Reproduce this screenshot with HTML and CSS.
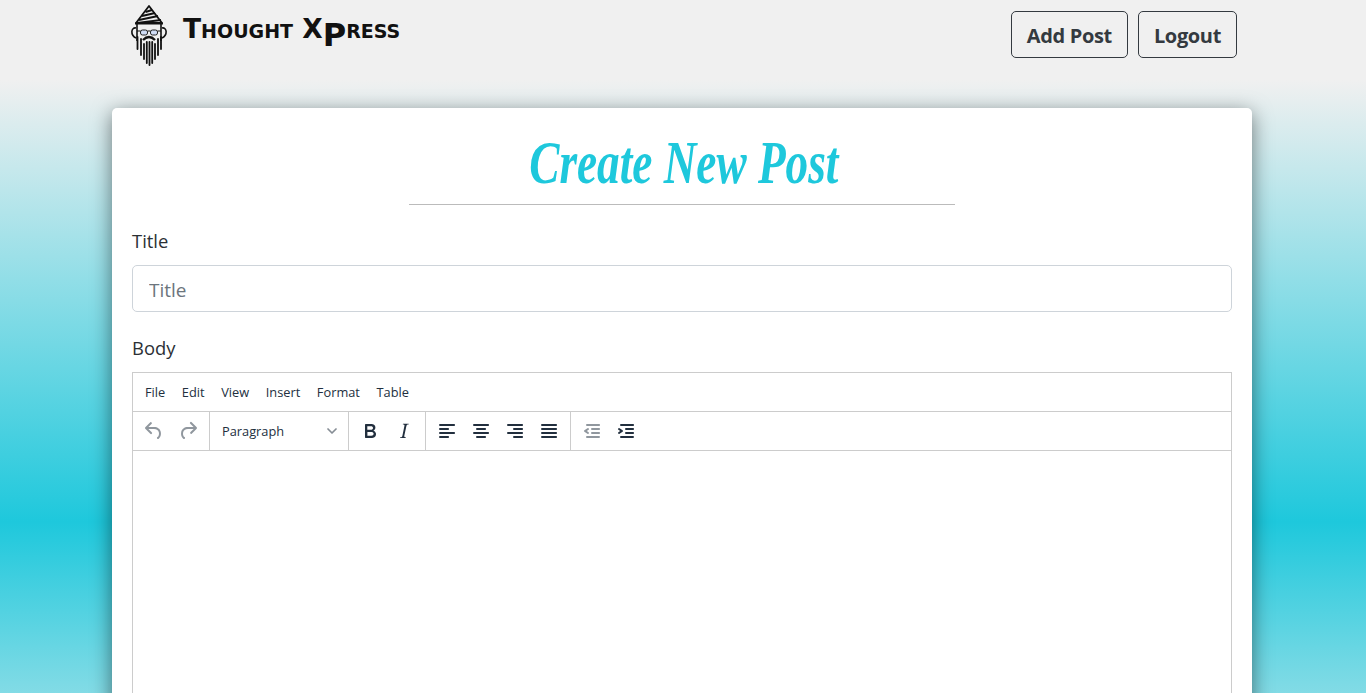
FILE: index.html
```html
<!DOCTYPE html>
<html lang="en">
<head>
<meta charset="utf-8">
<title>Create New Post</title>
<link rel="stylesheet" href="styles.css">
</head>
<body>
<header class="site-header">
  <a class="brand" href="#">
    <svg class="brand-mark" viewBox="0 0 40 62" width="40" height="62" aria-hidden="true">
      <path d="M20 1 L7 18 H33 Z" fill="#f0f0f0" stroke="#111" stroke-width="1.8" stroke-linejoin="round"/>
      <path d="M16.500 7 L23 5 M13 11 L26 8 M10 15 L29 11 M8 18 L32 15" stroke="#111" stroke-width="2" fill="none"/>
      <path d="M6 18.500 H34" stroke="#111" stroke-width="2"/>
      <path d="M8 19 V36 M32 19 V36" stroke="#111" stroke-width="1.600"/>
      <path d="M7 23 C2 22 1 30 7 33 M33 23 C38 22 39 30 33 33" fill="none" stroke="#111" stroke-width="1.600"/>
      <rect x="11.500" y="25" width="7" height="5" rx="2" fill="#cfdcf5" stroke="#222" stroke-width="1"/>
      <rect x="21.500" y="25" width="7" height="5" rx="2" fill="#cfdcf5" stroke="#222" stroke-width="1"/>
      <path d="M8 26 H11.500 M18.500 26 H21.500 M28.500 26 H32" stroke="#111" stroke-width="1.200"/>
      <path d="M14 35 Q20 29 26 35" fill="none" stroke="#111" stroke-width="2.400"/>
      <path d="M8.500 32 V44 M12 34 V50 M15 39 V54 M17.800 37 V58 M20.500 37 V60 M23.200 37 V58 M26 39 V54 M29 34 V50 M32 32 V44" stroke="#111" stroke-width="1.800" fill="none" stroke-linecap="round"/>
    </svg>
    <span class="brand-name">Thought X<span class="brand-drop">p</span>ress</span>
  </a>
  <nav class="site-nav">
    <a class="nav-btn" href="#">Add Post</a>
    <a class="nav-btn" href="#">Logout</a>
  </nav>
</header>

<main class="card">
  <h1 class="page-title"><span class="page-title-text">Create New Post</span></h1>
  <hr class="title-rule">
  <form class="post-form">
    <label class="field-label" for="title">Title</label>
    <input class="text-input" id="title" type="text" placeholder="Title">
    <label class="field-label body-label">Body</label>
    <div class="editor">
      <div class="menubar">
        <span>File</span><span>Edit</span><span>View</span><span>Insert</span><span>Format</span><span>Table</span>
      </div>
      <div class="toolbar">
        <div class="tb-group tb-first">
          <span class="tb-btn is-off"><svg width="24" height="24" viewBox="0 0 24 24"><path d="M6.4 8H12c3.7 0 6.2 2 6.8 5.1.6 2.7-.4 5.6-2.3 6.8a1 1 0 0 1-1-1.8c1.1-.6 1.8-2.7 1.4-4.6-.5-2.1-2.1-3.5-4.9-3.500H6.4l3.3 3.3a1 1 0 1 1-1.4 1.4l-5-5a1 1 0 0 1 0-1.400l5-5a1 1 0 0 1 1.400 1.400L6.400 8z"/></svg></span>
          <span class="tb-btn is-off"><svg width="24" height="24" viewBox="0 0 24 24"><path d="M17.6 10H12c-2.800 0-4.400 1.400-4.900 3.500-.4 2 .3 4 1.400 4.600a1 1 0 1 1-1 1.800c-2-1.200-2.900-4.100-2.300-6.800.6-3 3-5.100 6.800-5.100h5.600l-3.300-3.300a1 1 0 1 1 1.400-1.400l5 5a1 1 0 0 1 0 1.400l-5 5a1 1 0 0 1-1.400-1.400l3.300-3.300z"/></svg></span>
        </div>
        <div class="tb-select">
          <span>Paragraph</span>
          <svg width="10" height="10" viewBox="0 0 10 10"><path d="M1 3 L5 7 L9 3" fill="none" stroke="#222f3e" stroke-opacity=".55" stroke-width="1.700" stroke-linecap="round" stroke-linejoin="round"/></svg>
        </div>
        <div class="tb-group">
          <span class="tb-btn"><svg width="24" height="24" viewBox="0 0 24 24"><path fill-rule="evenodd" d="M7.800 19c-.3 0-.5 0-.6-.2l-.2-.5V5.700c0-.2 0-.4.2-.5l.6-.2h5c1.500 0 2.700.3 3.500 1 .7.6 1.100 1.400 1.100 2.500a3 3 0 0 1-.6 1.900c-.4.6-1 1-1.600 1.200.4.100.9.300 1.300.6s.8.7 1 1.200c.4.400.5 1 .5 1.600 0 1.300-.4 2.300-1.300 3-.8.7-2.100 1-3.800 1H7.800zm5-8.300c.6 0 1.200-.1 1.600-.5.4-.3.6-.7.6-1.300 0-1.100-.8-1.700-2.300-1.700H9.300v3.500h3.400zm.5 6c.7 0 1.300-.1 1.700-.4.4-.4.6-.9.6-1.500s-.2-1-.7-1.400c-.4-.3-1-.4-2-.4H9.400v3.800h4z"/></svg></span>
          <span class="tb-btn"><svg width="24" height="24" viewBox="0 0 24 24"><path d="M16.700 4.700l-.1.900h-.3c-.6 0-1 0-1.400.3-.3.3-.4.6-.5 1.100l-2.100 9.800v.6c0 .5.400.8 1.400.8h.2l-.2.800H8l.2-.8h.2c1.100 0 1.800-.5 2-1.500l2-9.800.1-.5c0-.6-.4-.8-1.400-.8h-.3l.2-.9h5.800z"/></svg></span>
        </div>
        <div class="tb-group">
          <span class="tb-btn"><svg width="24" height="24" viewBox="0 0 24 24"><path d="M5 5h14c.6 0 1 .4 1 1s-.4 1-1 1H5a1 1 0 1 1 0-2zm0 4h8c.6 0 1 .4 1 1s-.4 1-1 1H5a1 1 0 1 1 0-2zm0 8h8c.6 0 1 .4 1 1s-.4 1-1 1H5a1 1 0 0 1 0-2zm0-4h14c.6 0 1 .4 1 1s-.4 1-1 1H5a1 1 0 0 1 0-2z"/></svg></span>
          <span class="tb-btn"><svg width="24" height="24" viewBox="0 0 24 24"><path d="M5 5h14c.6 0 1 .4 1 1s-.4 1-1 1H5a1 1 0 1 1 0-2zm3 4h8c.6 0 1 .4 1 1s-.4 1-1 1H8a1 1 0 1 1 0-2zm0 8h8c.6 0 1 .4 1 1s-.4 1-1 1H8a1 1 0 0 1 0-2zm-3-4h14c.6 0 1 .4 1 1s-.4 1-1 1H5a1 1 0 0 1 0-2z"/></svg></span>
          <span class="tb-btn"><svg width="24" height="24" viewBox="0 0 24 24"><path d="M5 5h14c.6 0 1 .4 1 1s-.4 1-1 1H5a1 1 0 1 1 0-2zm6 4h8c.6 0 1 .4 1 1s-.4 1-1 1h-8a1 1 0 0 1 0-2zm0 8h8c.6 0 1 .4 1 1s-.4 1-1 1h-8a1 1 0 0 1 0-2zm-6-4h14c.6 0 1 .4 1 1s-.4 1-1 1H5a1 1 0 0 1 0-2z"/></svg></span>
          <span class="tb-btn"><svg width="24" height="24" viewBox="0 0 24 24"><path d="M5 5h14c.6 0 1 .4 1 1s-.4 1-1 1H5a1 1 0 1 1 0-2zm0 4h14c.6 0 1 .4 1 1s-.4 1-1 1H5a1 1 0 1 1 0-2zm0 4h14c.6 0 1 .4 1 1s-.4 1-1 1H5a1 1 0 0 1 0-2zm0 4h14c.6 0 1 .4 1 1s-.4 1-1 1H5a1 1 0 0 1 0-2z"/></svg></span>
        </div>
        <div class="tb-group tb-last">
          <span class="tb-btn is-off"><svg width="24" height="24" viewBox="0 0 24 24"><path d="M7 5h12c.6 0 1 .4 1 1s-.4 1-1 1H7a1 1 0 1 1 0-2zm5 4h7c.6 0 1 .4 1 1s-.4 1-1 1h-7a1 1 0 0 1 0-2zm0 4h7c.6 0 1 .4 1 1s-.4 1-1 1h-7a1 1 0 0 1 0-2zm-5 4h12a1 1 0 0 1 0 2H7a1 1 0 0 1 0-2zm1.600-3.800a1 1 0 0 1-1.200 1.600l-3-2a1 1 0 0 1 0-1.600l3-2a1 1 0 0 1 1.200 1.600L6.800 12l1.800 1.200z"/></svg></span>
          <span class="tb-btn"><svg width="24" height="24" viewBox="0 0 24 24"><path d="M7 5h12c.6 0 1 .4 1 1s-.4 1-1 1H7a1 1 0 1 1 0-2zm5 4h7c.6 0 1 .4 1 1s-.4 1-1 1h-7a1 1 0 0 1 0-2zm0 4h7c.6 0 1 .4 1 1s-.4 1-1 1h-7a1 1 0 0 1 0-2zm-5 4h12a1 1 0 0 1 0 2H7a1 1 0 0 1 0-2zm-2.600-3.800L6.200 12l-1.800-1.200a1 1 0 0 1 1.200-1.600l3 2a1 1 0 0 1 0 1.600l-3 2a1 1 0 1 1-1.200-1.600z"/></svg></span>
        </div>
      </div>
      <div class="edit-area"></div>
    </div>
  </form>
</main>
</body>
</html>
```

FILE: styles.css
```css
* { box-sizing: border-box; }

html, body {
  height: 693px;
  margin: 0;
  overflow: hidden;
}

body {
  padding-right: 2px;
  font-family: "Open Sans", "Noto Sans", sans-serif;
  color: #212529;
  background: linear-gradient(180deg, #f0f0f0 0, #f0f0f0 80px, #1ec8dc 522px, #f0f0f0 880px);
}

.site-header {
  width: 1140px;
  height: 108px;
  margin: 0 auto;
  padding: 0 15px;
  display: flex;
  justify-content: space-between;
  align-items: flex-start;
}

.brand {
  display: flex;
  align-items: flex-start;
  gap: 13px;
  padding-top: 5px;
  color: #111;
  text-decoration: none;
}

.brand-mark { display: block; margin-left: 2px; }

.brand-name {
  margin-top: 7px;
  margin-left: 1px;
  font-family: "DejaVu Sans", sans-serif;
  font-weight: 700;
  font-size: 26.500px;
  line-height: 34px;
  font-variant: small-caps;
  white-space: nowrap;
}

.brand-drop {
  font-size: 32px;
  font-variant: normal;
  text-transform: uppercase;
  line-height: 0;
  vertical-align: -8px;
}

.site-nav {
  display: flex;
  gap: 10px;
  padding-top: 11px;
}

.nav-btn {
  display: block;
  height: 47px;
  padding: 0 15px;
  border: 1px solid #343a40;
  border-radius: 5px;
  font-size: 20px;
  font-weight: 700;
  line-height: 47px;
  letter-spacing: -.35px;
  color: #343a40;
  text-decoration: none;
}

.card {
  width: 1140px;
  height: 900px;
  margin: 0 auto;
  padding: 20px;
  background: #fff;
  border-radius: 5px;
  box-shadow: 0 5px 20px rgba(0, 0, 0, .5);
}

.page-title {
  margin: 0 0 8px;
  padding-left: 4px;
  font-family: "Liberation Serif", serif;
  font-style: italic;
  font-weight: 700;
  font-size: 62px;
  line-height: 68px;
  text-align: center;
  color: #1ec8dc;
}

.page-title-text {
  display: inline-block;
  transform: scaleX(.73);
}

.title-rule {
  width: 546px;
  height: 1px;
  margin: 0 auto 24px;
  border: 0;
  background: #bbb;
}

.post-form { display: block; }

.field-label {
  display: block;
  font-size: 18.400px;
  line-height: 24px;
  color: #2b3035;
  margin-bottom: 12px;
}

.body-label { margin-top: 24px; }

.text-input {
  display: block;
  width: 100%;
  height: 47px;
  padding: 2px 16px 0;
  border: 1px solid #ced4da;
  border-radius: 5px;
  font: 19px/24px "Open Sans", sans-serif;
  background: #fff;
}

.text-input::placeholder { color: #6c757d; opacity: 1; }

.editor {
  border: 1px solid #ccc;
  height: 600px;
  display: flex;
  flex-direction: column;
}

.menubar {
  height: 39px;
  padding: 0 12px;
  display: flex;
  align-items: center;
  gap: 16.600px;
  font-size: 12.800px;
  color: #222f3e;
  border-bottom: 1px solid #ccc;
}

.toolbar {
  height: 39px;
  display: flex;
  border-bottom: 1px solid #ccc;
}

.tb-group {
  display: flex;
  align-items: center;
  padding: 0 4px;
  border-left: 1px solid #ccc;
}

.tb-first { padding-left: 4px; border-left: 0; }

.tb-btn {
  width: 34px;
  height: 34px;
  display: flex;
  align-items: center;
  justify-content: center;
  fill: #222f3e;
}

.is-off { fill: rgba(34, 47, 62, .5); }

.tb-select {
  width: 139px;
  padding: 0 11px 0 12px;
  display: flex;
  align-items: center;
  justify-content: space-between;
  font-size: 12.800px;
  color: #222f3e;
  border-left: 1px solid #ccc;
}

.edit-area { flex: 1; background: #fff; }
```
